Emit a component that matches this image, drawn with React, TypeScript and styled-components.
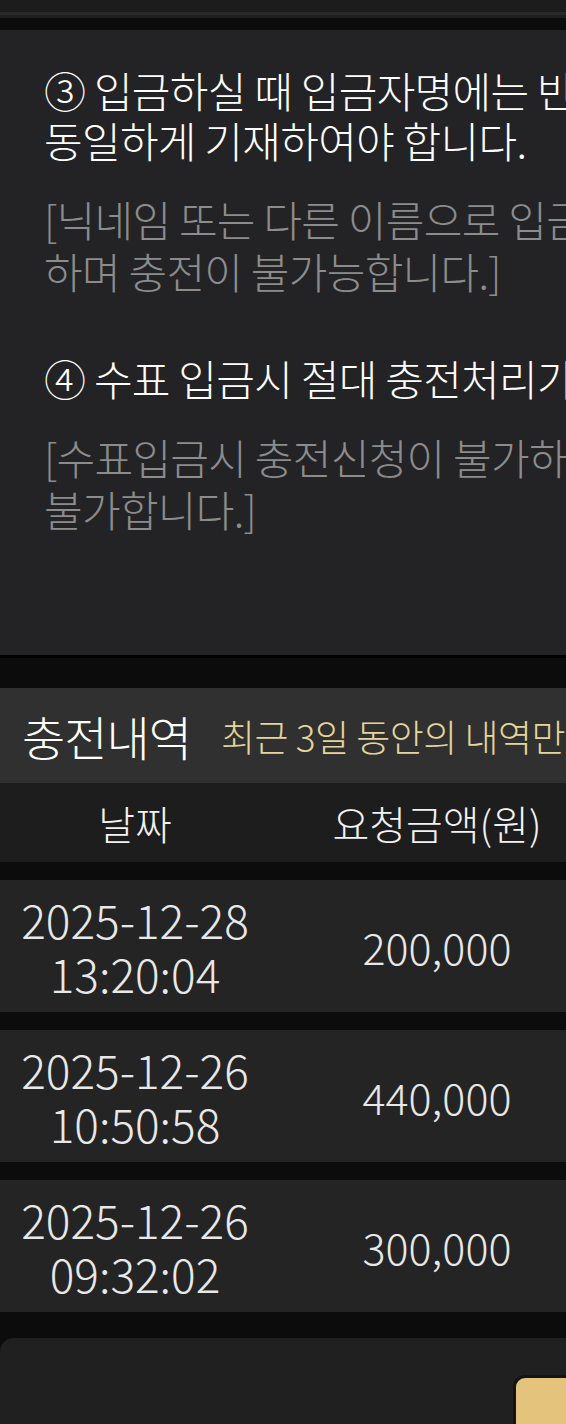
import styled, { createGlobalStyle } from "styled-components";

const GlobalStyle = createGlobalStyle`
   html, body {
      margin: 0;
      padding: 0;
      background: #0c0c0c;
      overflow: hidden;
   }
   body {
      font-family: "Noto Sans CJK KR", "Noto Sans", sans-serif;
      font-weight: 300;
      color: #fff;
   }
`;

interface Deposit {
   date: string;
   time: string;
   amount: string;
}

const history: Deposit[] = [
   { date: "2025-12-28", time: "13:20:04", amount: "200,000" },
   { date: "2025-12-26", time: "10:50:58", amount: "440,000" },
   { date: "2025-12-26", time: "09:32:02", amount: "300,000" },
];

// each notice is written line by line, the panel is wider than the screen
const notices = [
   {
      title: ["③ 입금하실 때 입금자명에는 반드시 회원가입시 등록하신 예금주명과", "동일하게 기재하여야 합니다."],
      note: ["[닉네임 또는 다른 이름으로 입금하실 경우 입금확인이 불가", "하며 충전이 불가능합니다.]"],
   },
   {
      title: ["④ 수표 입금시 절대 충전처리가 되지 않습니다."],
      note: ["[수표입금시 충전신청이 불가하며 입금확인이", "불가합니다.]"],
   },
];

const App = () => {
   return (
      <>
         <GlobalStyle />
         <Page>
            <TopStrip />
            <NoticePanel>
               {notices.map((n, i) => (
                  <NoticeItem key={i}>
                     <NoticeTitle>
                        {n.title.map((line) => (
                           <span key={line}>{line}</span>
                        ))}
                     </NoticeTitle>
                     <NoticeNote>
                        {n.note.map((line) => (
                           <span key={line}>{line}</span>
                        ))}
                     </NoticeNote>
                  </NoticeItem>
               ))}
            </NoticePanel>

            <HistorySection>
               <HistoryHeader>
                  <h2>충전내역</h2>
                  <span>최근 3일 동안의 내역만 표시됩니다.</span>
               </HistoryHeader>
               <TableHead>
                  <Cell>날짜</Cell>
                  <Cell>요청금액(원)</Cell>
               </TableHead>
               <Rows>
                  {history.map((row, i) => (
                     <Row key={i}>
                        <DateCell>
                           <span>{row.date}</span>
                           <span>{row.time}</span>
                        </DateCell>
                        <Cell>{row.amount}</Cell>
                     </Row>
                  ))}
               </Rows>
            </HistorySection>

            <BottomPanel>
               <ActionButton />
            </BottomPanel>
         </Page>
      </>
   );
};

const Page = styled.div`
   width: 780px;
   display: flex;
   flex-direction: column;
`;

const TopStrip = styled.div`
   height: 12px;
   background: #1c1c1c;
   border-bottom: 3px solid #2a2a2a;
   box-shadow: 0 3px 0 #1e1e1e;
   margin-bottom: 15px;
`;

const NoticePanel = styled.section`
   background: #232325;
   padding: 35px 0 120px 44px;
   display: flex;
   flex-direction: column;
   gap: 56px;
   border-bottom: 3px solid #000;
`;

const NoticeItem = styled.div`
   display: flex;
   flex-direction: column;
   gap: 28px;
`;

const NoticeTitle = styled.p`
   margin: 0;
   display: flex;
   flex-direction: column;
   font-size: 42px;
   line-height: 50px;
   letter-spacing: -0.7px;
   color: #fff;
   white-space: nowrap;
`;

const NoticeNote = styled(NoticeTitle)`
   line-height: 52px;
   color: #8c8c8c;
`;

const HistorySection = styled.section`
   margin-top: 30px;
   display: flex;
   flex-direction: column;
`;

const HistoryHeader = styled.div`
   height: 95px;
   background: #303030;
   display: flex;
   align-items: center;
   padding-left: 22px;
   gap: 30px;
   white-space: nowrap;

   h2 {
      margin: 0;
      font-size: 47px;
      font-weight: 300;
      color: #fff;
      letter-spacing: -1px;
   }
   span {
      font-size: 37px;
      color: #e3d59b;
      letter-spacing: -0.5px;
   }
`;

const grid = `
   display: grid;
   grid-template-columns: 270px 334px;
   align-items: center;
   text-align: center;
`;

const TableHead = styled.div`
   ${grid};
   height: 79px;
   background: #1d1d1d;
   font-size: 40px;
   color: #f2f2f2;
`;

const Rows = styled.div`
   display: flex;
   flex-direction: column;
   gap: 18px;
   padding: 18px 0 26px;
`;

const Row = styled.div`
   ${grid};
   height: 132px;
   background: #242424;
   font-size: 43px;
   color: #e8e8e8;
`;

const Cell = styled.div`
   white-space: nowrap;
`;

const DateCell = styled(Cell)`
   display: flex;
   flex-direction: column;
   font-size: 46px;
   line-height: 54px;
`;

const BottomPanel = styled.section`
   height: 200px;
   background: #202020;
   border-radius: 14px 14px 0 0;
   padding: 37px 0 0 513px;
`;

const ActionButton = styled.button`
   width: 200px;
   height: 80px;
   background: #e4c37c;
   border: 3px solid #141414;
   border-radius: 12px;
   padding: 0;
`;

export default App;
